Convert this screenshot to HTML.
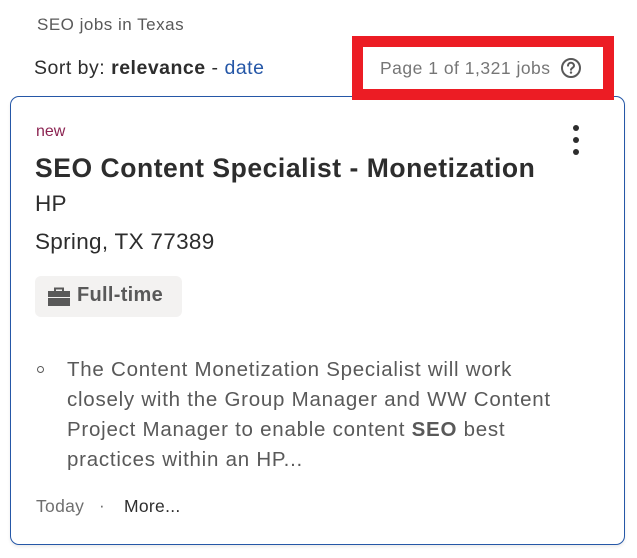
<!DOCTYPE html>
<html><head><meta charset="utf-8"><style>
*{margin:0;padding:0;box-sizing:border-box}
body{width:637px;height:558px;background:#fff;font-family:"Liberation Sans",sans-serif;position:relative;overflow:hidden;color:#2d2d2d}
.a{position:absolute;white-space:nowrap}
.card{position:absolute;left:10px;top:96px;width:615px;height:449px;border:1px solid #2557a7;border-radius:9px;box-shadow:0 2px 3px rgba(0,0,0,.08)}
.red{position:absolute;left:352px;top:36px;width:262px;height:64px;border:11px solid #ec1c24;background:#fff}
.dot{position:absolute;left:573px;width:6px;height:6px;border-radius:50%;background:#2d2d2d}
.badge{position:absolute;left:35px;top:276px;width:147px;height:41px;background:#f3f2f1;border-radius:6px}
.desc{position:absolute;left:67px;top:355px;font-size:20.5px;line-height:30px;color:#595959;letter-spacing:0.75px;white-space:nowrap}
</style></head><body>
<div class="a" style="left:37px;top:15px;font-size:17px;color:#595959;letter-spacing:0.5px">SEO jobs in Texas</div>
<div class="a" style="left:34px;top:57px;font-size:19.5px;color:#2d2d2d;letter-spacing:0.5px">Sort by: <b>relevance</b> - <span style="color:#2557a7">date</span></div>
<div class="card"></div>
<div class="red"></div>
<div class="a" style="left:380px;top:58px;font-size:17.5px;color:#767676;letter-spacing:0.5px">Page 1 of 1,321 jobs</div>
<svg class="a" style="left:560px;top:57px" width="22" height="22" viewBox="0 0 22 22"><circle cx="11" cy="11" r="9" fill="none" stroke="#595959" stroke-width="2"/><path d="M8 8.6a3 3 0 0 1 6 .2c0 2-3 2.2-3 4" fill="none" stroke="#595959" stroke-width="2" stroke-linecap="round"/><circle cx="11" cy="15.6" r="1.2" fill="#595959"/></svg>
<div class="a" style="left:36px;top:123px;font-size:16px;color:#8c2452">new</div>
<div class="dot" style="top:125px"></div><div class="dot" style="top:137px"></div><div class="dot" style="top:149px"></div>
<div class="a" style="left:35px;top:153px;font-size:26.5px;font-weight:bold;letter-spacing:0.55px">SEO Content Specialist - Monetization</div>
<div class="a" style="left:35px;top:191px;font-size:22.5px;letter-spacing:0.3px">HP</div>
<div class="a" style="left:35px;top:229px;font-size:22.5px;letter-spacing:0.3px">Spring, TX 77389</div>
<div class="badge"></div>
<svg class="a" style="left:48px;top:287px" width="22" height="19" viewBox="0 0 22 19"><path d="M7 4V1.5h8V4" fill="none" stroke="#595959" stroke-width="2"/><rect x="0" y="4" width="22" height="6" fill="#595959"/><rect x="0" y="11" width="22" height="8" fill="#595959"/></svg>
<div class="a" style="left:77px;top:284px;font-size:20px;font-weight:bold;color:#595959;letter-spacing:0.3px">Full-time</div>
<div class="a" style="left:37px;top:366px;width:7px;height:7px;border:1px solid #595959;border-radius:50%"></div>
<div class="desc">The Content Monetization Specialist will work<br>closely with the Group Manager and WW Content<br>Project Manager to enable content <b>SEO</b> best<br>practices within an HP...</div>
<div class="a" style="left:36px;top:496px;font-size:17.5px;color:#6f6f6f;letter-spacing:0.3px">Today</div>
<div class="a" style="left:99px;top:496px;font-size:17px;color:#6f6f6f">·</div>
<div class="a" style="left:124px;top:496px;font-size:17.5px;color:#2d2d2d;letter-spacing:0.3px">More...</div>
</body></html>
